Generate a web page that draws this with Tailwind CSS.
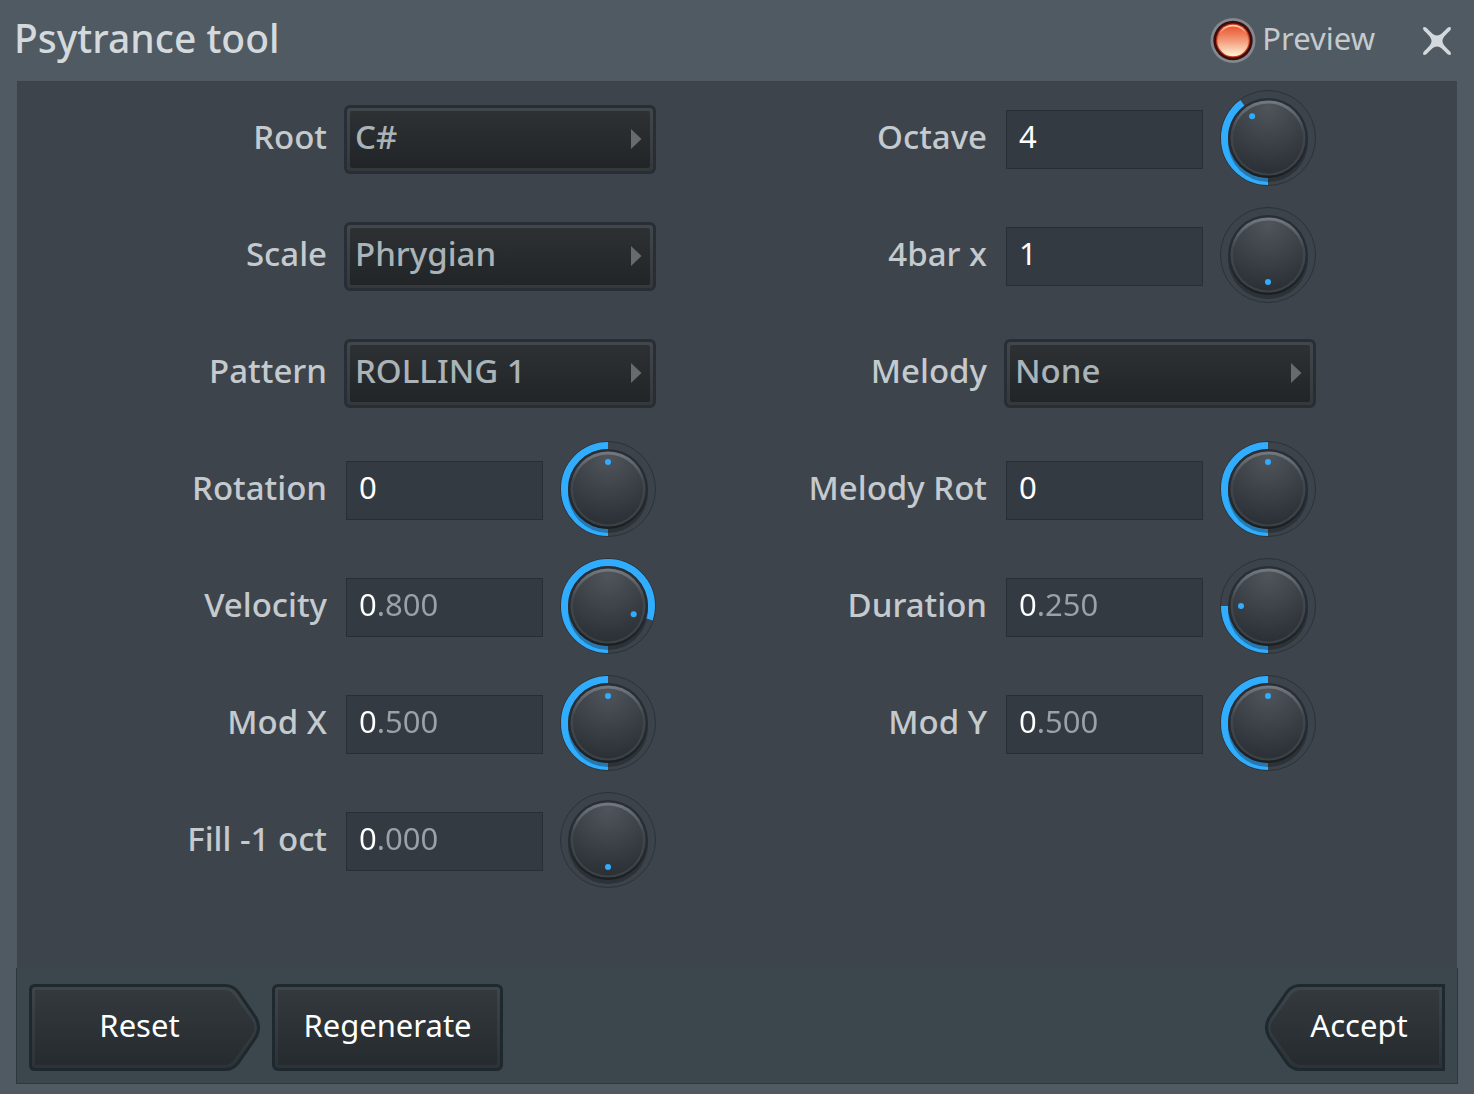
<!DOCTYPE html>
<html lang="en">
<head>
    <meta charset="UTF-8">
    <meta name="viewport" content="width=device-width, initial-scale=1.0">
    <title>Psytrance tool</title>
    <script src="https://cdn.jsdelivr.net/npm/@tailwindcss/browser@4"></script>
</head>
<body class="min-h-screen flex flex-col bg-[#505a62] font-['Noto_Sans','Open_Sans',sans-serif] text-[#c5cace]">

    <!-- Title bar -->
    <header class="h-[81px] flex items-center pl-3.5 pr-[22px] pb-1">
        <h1 class="flex-1 pb-0.5 text-[39px] leading-[52px] font-medium text-[#d3d9dd]">Psytrance tool</h1>
        <label class="flex items-center gap-1.5 text-[31px] leading-[44px] font-normal">
            <input type="checkbox" id="preview" class="sr-only" checked>
            <svg class="size-[46px] mt-1" viewBox="0 0 46 46">
                <defs>
                    <linearGradient id="lamp" x1="0" y1="0" x2="0" y2="1">
                        <stop offset="0" stop-color="#ea5530"/>
                        <stop offset="0.5" stop-color="#f39c7c"/>
                        <stop offset="1" stop-color="#fff0d6"/>
                    </linearGradient>
                    <linearGradient id="lampRim" x1="0" y1="0" x2="0" y2="1">
                        <stop offset="0" stop-color="#ffe2c4"/>
                        <stop offset="0.3" stop-color="#ee6a40"/>
                        <stop offset="1" stop-color="#fff0d0"/>
                    </linearGradient>
                </defs>
                <circle cx="23" cy="22.500" r="22.500" fill="#84898e"/>
                <circle cx="23" cy="22.500" r="19.7" fill="#3b0d10"/>
                <circle cx="23" cy="22.500" r="17" fill="#c43a1c"/>
                <circle cx="23" cy="22.500" r="15.8" fill="url(#lampRim)"/>
                <circle cx="23" cy="23" r="14.6" fill="url(#lamp)"/>
            </svg>
            <span class="pb-0.5">Preview</span>
        </label>
        <button class="ml-[47px] mt-1" aria-label="Close">
            <svg class="size-[30px]" viewBox="0 0 30 30">
                <path d="M4 1.500 C8 5 11 9.500 15 9.500 S22 5 26 1.500 Q30 0 28.500 4 C25 8 20.500 11 20.500 15 S25 22 28.500 26 Q30 30 26 28.500 C22 25 19 20.500 15 20.500 S8 25 4 28.500 Q0 30 1.500 26 C5 22 9.500 19 9.500 15 S5 8 1.500 4 Q0 0 4 1.500Z" fill="#d3d9dd"/>
            </svg>
        </button>
    </header>

    <!-- Settings -->
    <main class="flex-1 mx-[17px] pt-[10px] pr-[141px] bg-[#3d444b]">
        <div class="grid grid-cols-2 gap-x-[21px] gap-y-[21px] text-[33px] leading-[46px] font-medium">

            <div class="h-24 flex items-center gap-[17px]">
                <label for="root" class="flex-1 text-right pb-1">Root</label>
                <div class="relative w-[312px] h-[69px] p-[3px] rounded-md border-[3px] border-[#272e36] bg-linear-to-b from-[#42474b] to-[#36393c]">
                    <select id="root" class="appearance-none size-full rounded-xs pl-[5px] pb-1 bg-linear-to-b from-[#2d3134] to-[#212528] text-[#a9b3b8]"><option>C#</option><option>D</option><option>D#</option><option>E</option></select>
                    <svg class="absolute right-[11px] top-[21px] w-[11px] h-5 pointer-events-none" viewBox="0 0 11 20"><path d="M0 0 L10.5 10 L0 20Z" fill="#656b6e"/></svg>
                </div>
            </div>
            <div class="h-24 flex items-center gap-[17px]">
                <label for="octave" class="flex-1 text-right pb-1">Octave</label>
                <div class="w-[312px] flex items-center justify-between pl-0.5">
                    <div class="w-[197px] h-[59px] border border-[#272e36] bg-[#333a42]"><input type="text" id="octave" value="4" class="size-full pl-3 pb-1.5 text-[31px] font-normal text-white"></div>
                    <div class="knob relative size-24 mb-0.5" data-for="octave" data-name="Octave" data-value="0.4"></div>
                </div>
            </div>

            <div class="h-24 flex items-center gap-[17px]">
                <label for="scale" class="flex-1 text-right pb-1">Scale</label>
                <div class="relative w-[312px] h-[69px] p-[3px] rounded-md border-[3px] border-[#272e36] bg-linear-to-b from-[#42474b] to-[#36393c]">
                    <select id="scale" class="appearance-none size-full rounded-xs pl-[5px] pb-1 bg-linear-to-b from-[#2d3134] to-[#212528] text-[#a9b3b8]"><option>Phrygian</option><option>Minor</option><option>Major</option></select>
                    <svg class="absolute right-[11px] top-[21px] w-[11px] h-5 pointer-events-none" viewBox="0 0 11 20"><path d="M0 0 L10.5 10 L0 20Z" fill="#656b6e"/></svg>
                </div>
            </div>
            <div class="h-24 flex items-center gap-[17px]">
                <label for="bars" class="flex-1 text-right pb-1">4bar x</label>
                <div class="w-[312px] flex items-center justify-between pl-0.5">
                    <div class="w-[197px] h-[59px] border border-[#272e36] bg-[#333a42]"><input type="text" id="bars" value="1" class="size-full pl-3 pb-1.5 text-[31px] font-normal text-white"></div>
                    <div class="knob relative size-24 mb-0.5" data-for="bars" data-name="4bar x" data-value="0"></div>
                </div>
            </div>

            <div class="h-24 flex items-center gap-[17px]">
                <label for="pattern" class="flex-1 text-right pb-1">Pattern</label>
                <div class="relative w-[312px] h-[69px] p-[3px] rounded-md border-[3px] border-[#272e36] bg-linear-to-b from-[#42474b] to-[#36393c]">
                    <select id="pattern" class="appearance-none size-full rounded-xs pl-[5px] pb-1 bg-linear-to-b from-[#2d3134] to-[#212528] text-[#a9b3b8]"><option>ROLLING 1</option><option>ROLLING 2</option></select>
                    <svg class="absolute right-[11px] top-[21px] w-[11px] h-5 pointer-events-none" viewBox="0 0 11 20"><path d="M0 0 L10.5 10 L0 20Z" fill="#656b6e"/></svg>
                </div>
            </div>
            <div class="h-24 flex items-center gap-[17px]">
                <label for="melody" class="flex-1 text-right pb-1">Melody</label>
                <div class="relative w-[312px] h-[69px] p-[3px] rounded-md border-[3px] border-[#272e36] bg-linear-to-b from-[#42474b] to-[#36393c]">
                    <select id="melody" class="appearance-none size-full rounded-xs pl-[5px] pb-1 bg-linear-to-b from-[#2d3134] to-[#212528] text-[#a9b3b8]"><option>None</option><option>Simple</option></select>
                    <svg class="absolute right-[11px] top-[21px] w-[11px] h-5 pointer-events-none" viewBox="0 0 11 20"><path d="M0 0 L10.5 10 L0 20Z" fill="#656b6e"/></svg>
                </div>
            </div>

            <div class="h-24 flex items-center gap-[17px]">
                <label for="rotation" class="flex-1 text-right pb-1">Rotation</label>
                <div class="w-[312px] flex items-center justify-between pl-0.5">
                    <div class="w-[197px] h-[59px] border border-[#272e36] bg-[#333a42]"><input type="text" id="rotation" value="0" class="size-full pl-3 pb-1.5 text-[31px] font-normal text-white"></div>
                    <div class="knob relative size-24 mb-0.5" data-for="rotation" data-name="Rotation" data-value="0.5"></div>
                </div>
            </div>
            <div class="h-24 flex items-center gap-[17px]">
                <label for="melodyRot" class="flex-1 text-right pb-1">Melody Rot</label>
                <div class="w-[312px] flex items-center justify-between pl-0.5">
                    <div class="w-[197px] h-[59px] border border-[#272e36] bg-[#333a42]"><input type="text" id="melodyRot" value="0" class="size-full pl-3 pb-1.5 text-[31px] font-normal text-white"></div>
                    <div class="knob relative size-24 mb-0.5" data-for="melodyRot" data-name="Melody Rot" data-value="0.5"></div>
                </div>
            </div>

            <div class="h-24 flex items-center gap-[17px]">
                <label for="velocity" class="flex-1 text-right pb-1">Velocity</label>
                <div class="w-[312px] flex items-center justify-between pl-0.5">
                    <div class="w-[197px] h-[59px] border border-[#272e36] bg-[#333a42]"><input type="text" id="velocity" value="0.800" class="size-full pl-3 pb-1.5 text-[31px] font-normal text-transparent caret-white bg-clip-text bg-linear-to-r from-white from-[30px] to-[#9ba1a6] to-[30px]"></div>
                    <div class="knob relative size-24 mb-0.5" data-for="velocity" data-name="Velocity" data-value="0.8"></div>
                </div>
            </div>
            <div class="h-24 flex items-center gap-[17px]">
                <label for="duration" class="flex-1 text-right pb-1">Duration</label>
                <div class="w-[312px] flex items-center justify-between pl-0.5">
                    <div class="w-[197px] h-[59px] border border-[#272e36] bg-[#333a42]"><input type="text" id="duration" value="0.250" class="size-full pl-3 pb-1.5 text-[31px] font-normal text-transparent caret-white bg-clip-text bg-linear-to-r from-white from-[30px] to-[#9ba1a6] to-[30px]"></div>
                    <div class="knob relative size-24 mb-0.5" data-for="duration" data-name="Duration" data-value="0.25"></div>
                </div>
            </div>

            <div class="h-24 flex items-center gap-[17px]">
                <label for="modX" class="flex-1 text-right pb-1">Mod X</label>
                <div class="w-[312px] flex items-center justify-between pl-0.5">
                    <div class="w-[197px] h-[59px] border border-[#272e36] bg-[#333a42]"><input type="text" id="modX" value="0.500" class="size-full pl-3 pb-1.5 text-[31px] font-normal text-transparent caret-white bg-clip-text bg-linear-to-r from-white from-[30px] to-[#9ba1a6] to-[30px]"></div>
                    <div class="knob relative size-24 mb-0.5" data-for="modX" data-name="Mod X" data-value="0.5"></div>
                </div>
            </div>
            <div class="h-24 flex items-center gap-[17px]">
                <label for="modY" class="flex-1 text-right pb-1">Mod Y</label>
                <div class="w-[312px] flex items-center justify-between pl-0.5">
                    <div class="w-[197px] h-[59px] border border-[#272e36] bg-[#333a42]"><input type="text" id="modY" value="0.500" class="size-full pl-3 pb-1.5 text-[31px] font-normal text-transparent caret-white bg-clip-text bg-linear-to-r from-white from-[30px] to-[#9ba1a6] to-[30px]"></div>
                    <div class="knob relative size-24 mb-0.5" data-for="modY" data-name="Mod Y" data-value="0.5"></div>
                </div>
            </div>

            <div class="h-24 flex items-center gap-[17px]">
                <label for="fill" class="flex-1 text-right pb-1">Fill -1 oct</label>
                <div class="w-[312px] flex items-center justify-between pl-0.5">
                    <div class="w-[197px] h-[59px] border border-[#272e36] bg-[#333a42]"><input type="text" id="fill" value="0.000" class="size-full pl-3 pb-1.5 text-[31px] font-normal text-transparent caret-white bg-clip-text bg-linear-to-r from-white from-[30px] to-[#9ba1a6] to-[30px]"></div>
                    <div class="knob relative size-24 mb-0.5" data-for="fill" data-name="Fill -1 oct" data-value="0"></div>
                </div>
            </div>
        </div>
    </main>

    <!-- Actions -->
    <footer class="mx-4 mb-2.5 flex gap-3 px-3 pt-4 pb-[12px] border border-t-0 border-[#2c383f] bg-[#3b464d] text-[31px] leading-[44px] font-normal text-white">
        <button id="reset" class="relative w-[231px] h-[87px] pr-2.5 pb-1.5">
            <svg class="absolute inset-0 size-full" viewBox="0 0 231 87">
                <defs>
                    <linearGradient id="face" x1="0" y1="0" x2="0" y2="1">
                        <stop offset="0" stop-color="#33393c"/>
                        <stop offset="1" stop-color="#252b2e"/>
                    </linearGradient>
                    <linearGradient id="edge" x1="0" y1="0" x2="0" y2="1">
                        <stop offset="0" stop-color="#3f464a"/>
                        <stop offset="1" stop-color="#2c3235"/>
                    </linearGradient>
                </defs>
                <path d="M6 1.5 H196 Q204 1.5 209 8 L227 34 Q232 43.500 227 53 L209 79 Q204 85.500 196 85.500 H6 Q1.500 85.500 1.500 81 V6 Q1.500 1.500 6 1.500Z" fill="url(#edge)" stroke="#1d292f" stroke-width="3"/>
                <path d="M6 6 H195 Q201 6 205 11 L223 36 Q228 43.500 223 51 L205 76 Q201 81 195 81 H6Z" fill="url(#face)"/>
            </svg>
            <span class="relative">Reset</span>
        </button>
        <button id="regenerate" class="w-[231px] h-[87px] p-[3px] rounded-md border-[3px] border-[#1d292f] bg-linear-to-b from-[#3f464a] to-[#2c3235]">
            <span class="flex size-full items-center justify-center pb-1.5 bg-linear-to-b from-[#33393c] to-[#252b2e]">Regenerate</span>
        </button>
        <button id="accept" class="relative ml-auto w-[180px] h-[87px] pl-2 pb-1.5">
            <svg class="absolute inset-0 size-full" viewBox="0 0 180 87">
                <path d="M178.500 1.500 H35 Q27 1.500 22 8 L4 34 Q-1 43.500 4 53 L22 79 Q27 85.500 35 85.500 H178.500Z" fill="url(#edge)" stroke="#1d292f" stroke-width="3"/>
                <path d="M174 6 H36 Q30 6 26 11 L8 36 Q3 43.500 8 51 L26 76 Q30 81 36 81 H174Z" fill="url(#face)"/>
            </svg>
            <span class="relative">Accept</span>
        </button>
    </footer>

    <!-- Shared knob gradients -->
    <svg class="absolute size-0" aria-hidden="true">
        <defs>
            <radialGradient id="cap" cx="0.5" cy="0.05" r="0.95">
                <stop offset="0" stop-color="#50555c"/>
                <stop offset="1" stop-color="#2b3036"/>
            </radialGradient>
            <linearGradient id="capRim" x1="0" y1="0" x2="0" y2="1">
                <stop offset="0" stop-color="#747a80"/>
                <stop offset="0.4" stop-color="#42474c"/>
                <stop offset="1" stop-color="#3b4144"/>
            </linearGradient>
            <linearGradient id="well" x1="0" y1="0" x2="0" y2="1">
                <stop offset="0" stop-color="#282f37"/>
                <stop offset="0.6" stop-color="#262c33"/>
                <stop offset="1" stop-color="#1a1f22"/>
            </linearGradient>
        </defs>
    </svg>

    <script>
        // The value arc starts at the bottom and runs clockwise
        function drawKnob(knob, value) {
            const angle = value * 2 * Math.PI;
            knob.querySelector(".arc").setAttribute("stroke-dasharray", `${value * 100} 101`);
            knob.querySelector(".arc").setAttribute("visibility", value > 0 ? "visible" : "hidden");
            knob.querySelector(".dot").setAttribute("cx", 48 - 27 * Math.sin(angle));
            knob.querySelector(".dot").setAttribute("cy", 48 + 27 * Math.cos(angle));
        }

        function setField(id, value) {
            const field = document.getElementById(id);
            if (id === "octave") field.value = Math.round(value * 10);
            else if (id === "bars") field.value = 1 + Math.round(value * 7);
            else if (id === "rotation" || id === "melodyRot") field.value = Math.round((value - 0.5) * 32);
            else field.value = value.toFixed(3);
        }

        document.querySelectorAll(".knob").forEach((knob) => {
            knob.innerHTML = `
                <svg class="size-full" viewBox="0 0 96 96">
                    <circle cx="48" cy="48" r="47.5" fill="#3c434a" stroke="#2b3239"/>
                    <circle class="arc" cx="48" cy="48" r="43.5" fill="none" stroke="#30adff" stroke-width="7" pathLength="100" transform="rotate(90 48 48)"/>
                    <circle cx="48" cy="52" r="40" fill="#101316" opacity="0.35"/>
                    <circle cx="48" cy="48" r="40" fill="url(#well)"/>
                    <circle cx="48" cy="48" r="37.5" fill="url(#capRim)"/>
                    <circle cx="48" cy="48.500" r="35" fill="url(#cap)"/>
                    <circle class="dot" r="3" fill="#30adff"/>
                </svg>
                <input type="range" min="0" max="1" step="0.001" value="${knob.dataset.value}" aria-label="${knob.dataset.name} knob" class="absolute inset-0 size-full opacity-0 cursor-pointer">
            `;
            drawKnob(knob, Number(knob.dataset.value));
            knob.querySelector("input").addEventListener("input", (e) => {
                drawKnob(knob, Number(e.target.value));
                setField(knob.dataset.for, Number(e.target.value));
            });
        });

        // Reset puts every knob back to its starting value
        document.getElementById("reset").addEventListener("click", () => {
            document.querySelectorAll(".knob").forEach((knob) => {
                const value = Number(knob.dataset.value);
                knob.querySelector("input").value = value;
                drawKnob(knob, value);
                setField(knob.dataset.for, value);
            });
        });
    </script>

</body>
</html>
